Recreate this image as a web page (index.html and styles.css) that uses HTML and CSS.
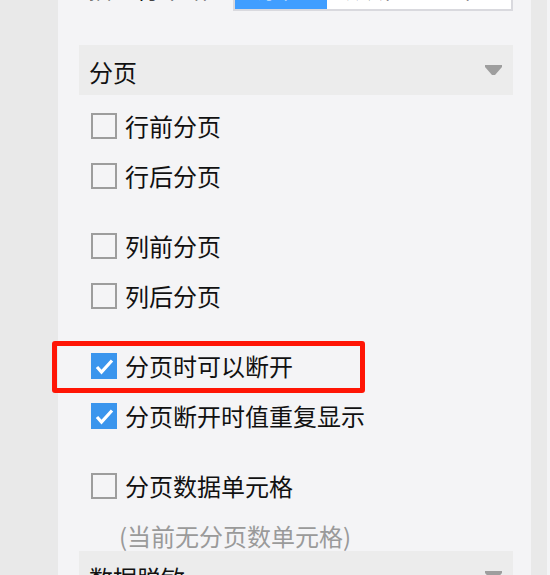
FILE: index.html
```html
<!DOCTYPE html>
<html lang="zh-CN">
<head>
<meta charset="utf-8">
<title>分页</title>
<link rel="stylesheet" href="styles.css">
</head>
<body>
<div class="panel">
  <div class="top">
    <span class="top-label">插入行策略</span>
    <div class="seg">
      <span class="seg-item seg-a active">原值</span>
      <span class="seg-item seg-b">默认值</span>
      <span class="seg-item seg-c">空值</span>
    </div>
  </div>

  <div class="section-head">
    <span>分页</span>
    <svg class="caret" width="17" height="10" viewBox="0 0 17 10"><polygon points="0,0 17,0 17,2 10,10 7,10 0,2" fill="#9e9e9e"/></svg>
  </div>

  <div class="list">
    <label class="row first"><span class="box"></span><span>行前分页</span></label>
    <label class="row"><span class="box"></span><span>行后分页</span></label>
    <label class="row group"><span class="box"></span><span>列前分页</span></label>
    <label class="row"><span class="box"></span><span>列后分页</span></label>
    <label class="row group"><span class="box checked"><svg width="26" height="26" viewBox="0 0 26 26"><polyline points="6,14 10.5,19 21,7.5" fill="none" stroke="#fff" stroke-width="3.2" stroke-linejoin="miter"/></svg></span><span>分页时可以断开</span></label>
    <label class="row"><span class="box checked"><svg width="26" height="26" viewBox="0 0 26 26"><polyline points="6,14 10.5,19 21,7.5" fill="none" stroke="#fff" stroke-width="3.2" stroke-linejoin="miter"/></svg></span><span>分页断开时值重复显示</span></label>
    <label class="row group"><span class="box"></span><span>分页数据单元格</span></label>
    <div class="note">(当前无分页数单元格)</div>
  </div>

  <div class="section-head second">
    <span>数据脱敏</span>
    <svg class="caret" width="17" height="10" viewBox="0 0 17 10"><polygon points="0,0 17,0 17,2 10,10 7,10 0,2" fill="#9e9e9e"/></svg>
  </div>
</div>
<div class="gutter"></div>
<div class="edge"></div>
<div class="highlight"></div>
</body>
</html>
```

FILE: styles.css
```css
html, body {
  margin: 0;
  padding: 0;
  height: 100%;
  overflow: hidden;
}

body {
  display: flex;
  background: #e9e9e9;
  font-family: "Noto Sans CJK SC", "Noto Sans", sans-serif;
  color: #111;
}

.panel {
  margin-left: 58px;
  width: 473px;
  box-sizing: border-box;
  padding: 0 18px 0 21px;
  background: #f4f4f6;
  height: 100%;
}

.gutter {
  width: 16px;
  background: #e9e9e9;
}

.edge {
  width: 3px;
  background: #f4f4f6;
}

.top {
  display: flex;
  align-items: center;
  height: 42px;
  margin-top: -31px;
}

.top-label {
  margin-left: 9px;
  width: 120px;
  font-size: 24px;
  line-height: 26px;
  padding-bottom: 5px;
}

.seg {
  margin-left: 25px;
  width: 280px;
  height: 42px;
  box-sizing: border-box;
  border: 2px solid #d9d9de;
  background: #fff;
  display: flex;
}

.seg-item {
  display: flex;
  align-items: center;
  justify-content: center;
  font-size: 24px;
  line-height: 26px;
  color: #111;
  padding-bottom: 5px;
}

.seg-a { width: 92px; }
.seg-b { width: 88px; }
.seg-c { flex: 1; }

.seg-item.active {
  background: #409eff;
  color: #fff;
}

.section-head {
  margin-top: 34px;
  height: 50px;
  background: #ececec;
  display: flex;
  align-items: center;
  justify-content: space-between;
  padding: 0 11px 0 10px;
  font-size: 24px;
  line-height: 26px;
  color: #111;
}

.section-head span {
  margin-top: 3px;
}

.section-head.second {
  margin-top: 3px;
}

.caret {
  display: block;
}

.list {
  padding-left: 12px;
}

.row {
  display: flex;
  align-items: center;
  gap: 8px;
  height: 26px;
  margin-top: 24px;
  font-size: 24px;
  line-height: 26px;
  color: #111;
}

.row.first { margin-top: 18px; }
.row.group { margin-top: 44px; }

.box {
  width: 26px;
  height: 26px;
  box-sizing: border-box;
  border: 2px solid #9d9d9d;
  flex: none;
  display: block;
}

.box svg {
  display: block;
  margin: -2px;
}

.box.checked {
  background: #3a95ed;
  border-color: #3a95ed;
}

.note {
  margin-top: 24px;
  margin-left: 28px;
  font-size: 24px;
  line-height: 25px;
  color: #9a9a9a;
}

.highlight {
  position: absolute;
  left: 52px;
  top: 341px;
  width: 313px;
  height: 52px;
  box-sizing: border-box;
  border: 5px solid #ff1505;
  border-radius: 3px;
}
```
